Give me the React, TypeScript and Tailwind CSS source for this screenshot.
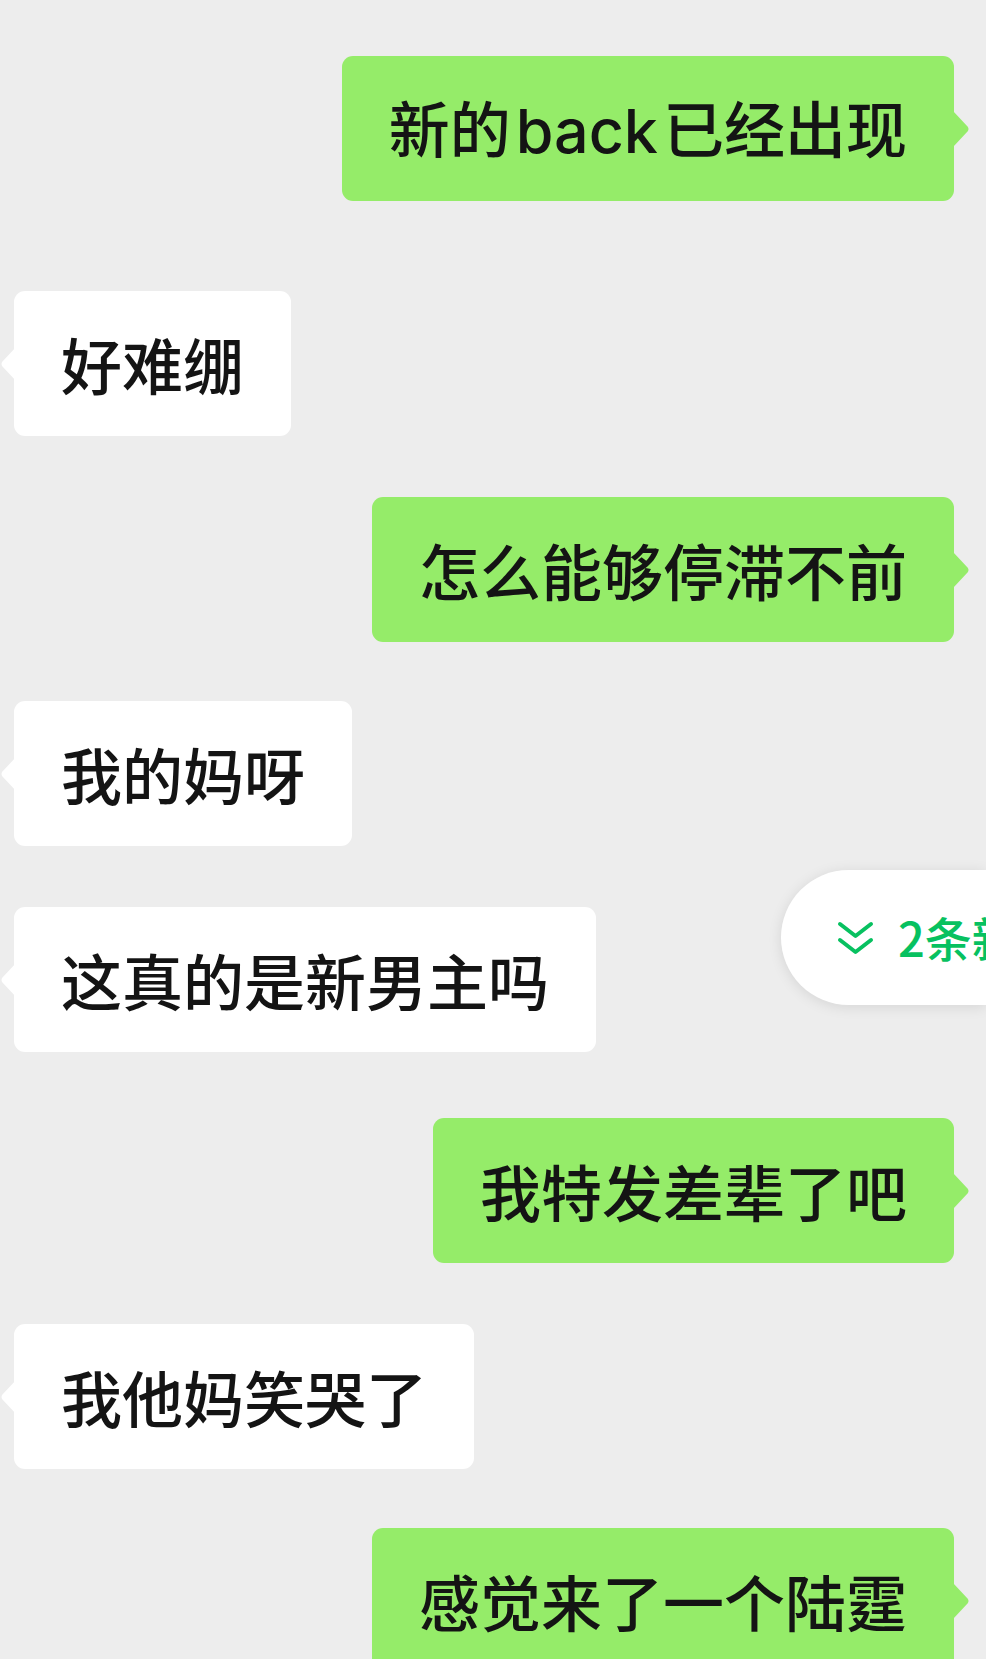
type Msg = { text: string; mine: boolean; gap: number };

const messages: Msg[] = [
  { text: "新的back已经出现", mine: true, gap: 56 },
  { text: "好难绷", mine: false, gap: 90 },
  { text: "怎么能够停滞不前", mine: true, gap: 61 },
  { text: "我的妈呀", mine: false, gap: 59 },
  { text: "这真的是新男主吗", mine: false, gap: 61 },
  { text: "我特发差辈了吧", mine: true, gap: 66 },
  { text: "我他妈笑哭了", mine: false, gap: 61 },
  { text: "感觉来了一个陆霆", mine: true, gap: 59 },
];

const font = { fontFamily: '"Noto Sans CJK SC", "Noto Sans", sans-serif' };

function Tail({ mine }: { mine: boolean }) {
  return (
    <svg
      width="17"
      height="36"
      viewBox="0 0 17 36"
      className={mine ? "absolute -right-[16px] top-1/2 -translate-y-1/2" : "absolute -left-[14px] top-1/2 -translate-y-1/2 -scale-x-100"}
    >
      <path
        d="M0 0 L14.5 15.5 Q16.5 18 14.5 20.5 L0 36 Z"
        fill={mine ? "#95ec69" : "#ffffff"}
      />
    </svg>
  );
}

function Bubble({ msg }: { msg: Msg }) {
  const text = msg.text.replace("back", "");
  return (
    <div
      className={`flex ${msg.mine ? "justify-end pr-[32px]" : "justify-start pl-[14px]"}`}
      style={{ marginTop: msg.gap }}
    >
      <div
        className={`relative h-[145px] flex items-center px-[47px] rounded-[11px] text-[61px] font-medium leading-none text-[#141414] ${
          msg.mine ? "bg-[#95ec69]" : "bg-white"
        }`}
      >
        {msg.text.includes("back") ? (
          <span className="whitespace-nowrap">
            {text.slice(0, 2)}
            <span className="mx-[5px]" style={{ fontFamily: '"Inter", "Noto Sans", sans-serif', fontWeight: 500 }}>back</span>
            {text.slice(2)}
          </span>
        ) : (
          <span className="whitespace-nowrap">{msg.text}</span>
        )}
        <Tail mine={msg.mine} />
      </div>
    </div>
  );
}

export default function App() {
  return (
    <div className="relative w-[986px] h-[1659px] overflow-hidden bg-[#ededed]" style={font}>
      <div className="flex flex-col">
        {messages.map((m, i) => (
          <Bubble key={i} msg={m} />
        ))}
      </div>

      <div className="absolute right-0 top-[870px] h-[135px] w-[205px] rounded-l-full bg-white shadow-[0_2px_14px_rgba(0,0,0,0.10)] flex items-center pl-[56px] gap-[24px]">
        <svg width="37" height="34" viewBox="0 0 37 34" className="shrink-0" fill="none" stroke="#07c160" strokeWidth="4" strokeLinecap="round" strokeLinejoin="round">
          <path d="M3 3 L18.5 15 L34 3" />
          <path d="M3 19 L18.5 31 L34 19" />
        </svg>
        <span className="text-[47px] font-medium text-[#07c160] whitespace-nowrap">2条新消息</span>
      </div>
    </div>
  );
}
